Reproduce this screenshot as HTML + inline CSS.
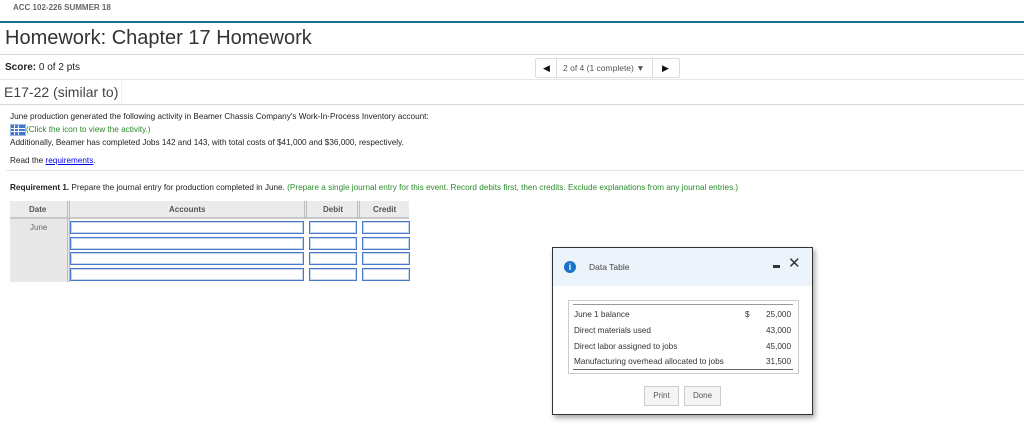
<!DOCTYPE html>
<html><head><style>
body{margin:0;width:1024px;height:437px;background:#fff;font-family:"Liberation Sans",Arial,sans-serif;position:relative;overflow:hidden;color:#222}
.a{position:absolute;white-space:nowrap}
.hl{position:absolute;left:0;right:0;height:1px;background:#d3d8de}
.inp{position:absolute;height:11px;border:1px solid #4a78c9;background:#fff;box-shadow:inset 0 0 0 1px #c8d6ef}
.btn{position:absolute;height:18px;border:1px solid #ccc;background:#f4f4f4;font-size:8px;color:#555;text-align:center;line-height:18px}
.t{font-size:8.2px;color:#333}
</style></head><body>
<div class="a" style="left:13px;top:3px;font-size:8px;font-weight:bold;color:#666">ACC 102-226 SUMMER 18</div>
<div style="position:absolute;left:0;right:0;top:21px;height:2px;background:#1c6f8c"></div>
<div class="a" style="left:5px;top:27px;font-size:20px;color:#333">Homework: Chapter 17 Homework</div>
<div class="hl" style="top:54px"></div>
<div class="a" style="left:5px;top:62px;font-size:10px;color:#222"><b>Score:</b> 0 of 2 pts</div>
<div style="position:absolute;left:535px;top:58px;width:143px;height:18px;border:1px solid #ddd;border-radius:2px;font-size:8.5px;color:#555">
<span class="a" style="left:7px;top:4px;font-size:9px;color:#111">◀</span>
<div style="position:absolute;left:20px;top:0;width:1px;height:18px;background:#ddd"></div>
<span class="a" style="left:27px;top:4px">2 of 4 (1 complete) ▼</span>
<div style="position:absolute;left:116px;top:0;width:1px;height:18px;background:#ddd"></div>
<span class="a" style="left:126px;top:4px;font-size:9px;color:#111">▶</span>
</div>
<div class="hl" style="top:79px;background:#e6e6e6"></div>
<div class="a" style="left:4px;top:84px;font-size:14px;color:#444">E17-22 (similar to)</div>
<div style="position:absolute;left:121px;top:80px;width:1px;height:24px;background:#eee"></div>
<div class="hl" style="top:104px"></div>
<div class="a" style="left:10px;top:112px;font-size:8.2px">June production generated the following activity in Beamer Chassis Company's Work-In-Process Inventory account:</div>
<div style="position:absolute;left:10px;top:124px;width:14px;height:10px;border:1px solid #9bb7e0;background:#3d78d4;background-image:linear-gradient(90deg,transparent 3px,#fff 3px,#fff 4px,transparent 4px,transparent 7px,#fff 7px,#fff 8px,transparent 8px),linear-gradient(0deg,transparent 3px,#fff 3px,#fff 4px,transparent 4px,transparent 6px,#fff 6px,#fff 7px,transparent 7px)"></div>
<div class="a" style="left:26px;top:125px;font-size:8.2px;color:#2a8a2a">(Click the icon to view the activity.)</div>
<div class="a" style="left:10px;top:138px;font-size:8.2px">Additionally, Beamer has completed Jobs 142 and 143, with total costs of $41,000 and $36,000, respectively.</div>
<div class="a" style="left:10px;top:156px;font-size:8.2px">Read the <span style="color:#00e;text-decoration:underline">requirements</span>.</div>
<div class="hl" style="top:170px;left:6px;background:#e2e5ea"></div>
<div class="a" style="left:10px;top:183px;font-size:8.2px"><b>Requirement 1.</b> Prepare the journal entry for production completed in June. <span style="color:#2a8a2a">(Prepare a single journal entry for this event. Record debits first, then credits. Exclude explanations from any journal entries.)</span></div>
<div style="position:absolute;left:10px;top:201px;width:399px;height:81px;background:#e8e8e8"></div>
<div style="position:absolute;left:10px;top:201px;width:399px;height:16px;background:#ebebeb;border-bottom:2px solid #c8c8c8;font-size:8px;color:#555;font-weight:bold">
<span class="a" style="left:19px;top:4px">Date</span><span class="a" style="left:159px;top:4px">Accounts</span><span class="a" style="left:313px;top:4px">Debit</span><span class="a" style="left:363px;top:4px">Credit</span></div>
<div style="position:absolute;left:67px;top:201px;width:1px;height:81px;border-left:1px solid #bbb;border-right:1px solid #bbb"></div>
<div style="position:absolute;left:304px;top:201px;width:1px;height:81px;border-left:1px solid #bbb;border-right:1px solid #bbb"></div>
<div style="position:absolute;left:357px;top:201px;width:1px;height:81px;border-left:1px solid #bbb;border-right:1px solid #bbb"></div>
<div class="a" style="left:30px;top:223px;font-size:8px;color:#666">June</div>
<div style="position:absolute;left:70px;top:219px;width:339px;height:63px;background:#fff"></div>
<div class="inp" style="left:70px;top:221px;width:232px"></div><div class="inp" style="left:309px;top:221px;width:46px"></div><div class="inp" style="left:362px;top:221px;width:46px"></div>
<div class="inp" style="left:70px;top:237px;width:232px"></div><div class="inp" style="left:309px;top:237px;width:46px"></div><div class="inp" style="left:362px;top:237px;width:46px"></div>
<div class="inp" style="left:70px;top:252px;width:232px"></div><div class="inp" style="left:309px;top:252px;width:46px"></div><div class="inp" style="left:362px;top:252px;width:46px"></div>
<div class="inp" style="left:70px;top:268px;width:232px"></div><div class="inp" style="left:309px;top:268px;width:46px"></div><div class="inp" style="left:362px;top:268px;width:46px"></div>
<div style="position:absolute;left:552px;top:247px;width:259px;height:166px;border:1px solid #333;background:#fff;box-shadow:2px 3px 5px rgba(0,0,0,.35)">
<div style="position:absolute;left:0;top:0;width:259px;height:38px;background:#edf3fb"></div>
<div style="position:absolute;left:11px;top:13px;width:12px;height:12px;border-radius:50%;background:#1a73c8;color:#fff;font-size:9px;font-weight:bold;text-align:center;line-height:12px">i</div>
<div class="a" style="left:36px;top:14px;font-size:8.5px;color:#444">Data Table</div>
<div style="position:absolute;left:220px;top:17px;width:7px;height:3px;background:#333"></div>
<div class="a" style="left:235px;top:6px;font-size:15px;color:#333">✕</div>
<div style="position:absolute;left:15px;top:52px;width:229px;height:72px;border:1px solid #ccc">
<div style="position:absolute;left:4px;top:3px;width:220px;border-top:1px solid #999"></div>
<div style="position:absolute;left:4px;top:68px;width:220px;border-top:1px solid #666"></div>
<div class="a t" style="left:5px;top:9px">June 1 balance</div><div class="a t" style="left:176px;top:9px">$</div><div class="a t" style="left:197px;top:9px">25,000</div>
<div class="a t" style="left:5px;top:25px">Direct materials used</div><div class="a t" style="left:197px;top:25px">43,000</div>
<div class="a t" style="left:5px;top:41px">Direct labor assigned to jobs</div><div class="a t" style="left:197px;top:41px">45,000</div>
<div class="a t" style="left:5px;top:56px">Manufacturing overhead allocated to jobs</div><div class="a t" style="left:197px;top:56px">31,500</div>
</div>
<div class="btn" style="left:91px;top:138px;width:33px">Print</div>
<div class="btn" style="left:131px;top:138px;width:35px">Done</div>
</div>
</body></html>
